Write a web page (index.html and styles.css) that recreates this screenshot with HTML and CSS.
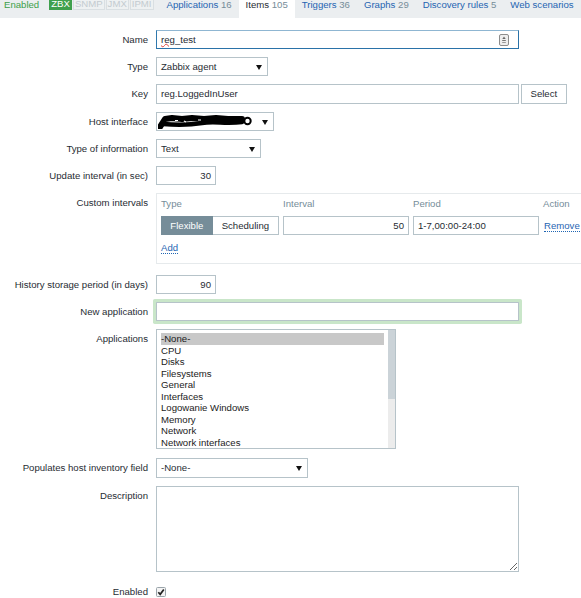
FILE: index.html
```html
<!DOCTYPE html>
<html>
<head>
<meta charset="utf-8">
<link rel="stylesheet" href="styles.css">
</head>
<body>
<div class="tabs">
  <span class="status">Enabled</span>
  <span class="badges"><span class="badge on">ZBX</span><span class="badge">SNMP</span><span class="badge">JMX</span><span class="badge">IPMI</span></span>
  <ul class="nav">
    <li><a>Applications</a> <span class="cnt">16</span></li>
    <li class="active">Items <span class="cnt">105</span></li>
    <li><a>Triggers</a> <span class="cnt">36</span></li>
    <li><a>Graphs</a> <span class="cnt">29</span></li>
    <li><a>Discovery rules</a> <span class="cnt">5</span></li>
    <li><a>Web scenarios</a></li>
  </ul>
</div>

<div class="form">
  <div class="row">
    <div class="lbl">Name</div>
    <div class="inp w-full focus"><span class="spell">reg</span>_test
      <svg class="autofill" width="10" height="12" viewBox="0 0 10 12"><rect x="0.5" y="0.5" width="9" height="11" rx="1.5" fill="#eeeeee" stroke="#8c8c8c"/><polygon points="3.3,5 6.7,5 5,2.6" fill="#666"/><rect x="3.2" y="6" width="3.6" height="1" fill="#777"/><rect x="3.2" y="8" width="3.6" height="1" fill="#999"/></svg>
    </div>
  </div>
  <div class="row">
    <div class="lbl">Type</div>
    <div class="inp sel w-type">Zabbix agent<svg class="arr" width="6" height="5" viewBox="0 0 6 5"><polygon points="0,0 6,0 3,5" fill="#111"/></svg></div>
  </div>
  <div class="row">
    <div class="lbl">Key</div>
    <div class="inp w-full">reg.LoggedInUser</div>
    <div class="btn">Select</div>
  </div>
  <div class="row">
    <div class="lbl">Host interface</div>
    <div class="inp sel w-host">
      <svg class="scribble" width="96" height="15" viewBox="0 0 96 15"><path d="M2,13 L7,5 L14,4 L24,5 L34,4 L46,5 L58,4 L70,5 L84,5" stroke="#000" stroke-width="6" fill="none" stroke-linecap="round" stroke-linejoin="round"/><path d="M5,10 C18,11 32,11 44,9 S68,10 84,8" stroke="#000" stroke-width="4.5" fill="none" stroke-linecap="round"/><path d="M17,6.5 L20,6.5 M26,7 L28,8 M40,6 L43,6" stroke="#fff" stroke-width="1.2"/><circle cx="89.5" cy="7" r="3.2" fill="#fff" stroke="#000" stroke-width="2"/></svg>
      <svg class="arr" width="6" height="5" viewBox="0 0 6 5"><polygon points="0,0 6,0 3,5" fill="#111"/></svg></div>
  </div>
  <div class="row">
    <div class="lbl">Type of information</div>
    <div class="inp sel w-info">Text<svg class="arr" width="6" height="5" viewBox="0 0 6 5"><polygon points="0,0 6,0 3,5" fill="#111"/></svg></div>
  </div>
  <div class="row">
    <div class="lbl">Update interval (in sec)</div>
    <div class="inp num">30</div>
  </div>
  <div class="row row-ci">
    <div class="lbl">Custom intervals</div>
    <div class="ci">
      <div class="ci-grid">
        <div class="th">Type</div>
        <div class="th">Interval</div>
        <div class="th">Period</div>
        <div class="th">Action</div>
        <div class="seg"><span class="seg-on">Flexible</span><span class="seg-off">Scheduling</span></div>
        <div class="inp num-wide">50</div>
        <div class="inp">1-7,00:00-24:00</div>
        <div class="act"><a class="link">Remove</a></div>
      </div>
      <div class="add"><a class="link">Add</a></div>
    </div>
  </div>
  <div class="row">
    <div class="lbl">History storage period (in days)</div>
    <div class="inp num">90</div>
  </div>
  <div class="row">
    <div class="lbl">New application</div>
    <div class="inp w-full glow"></div>
  </div>
  <div class="row row-lb">
    <div class="lbl">Applications</div>
    <div class="lb">
      <div class="lb-items">
        <div class="lb-item sel-item">-None-</div>
        <div class="lb-item">CPU</div>
        <div class="lb-item">Disks</div>
        <div class="lb-item">Filesystems</div>
        <div class="lb-item">General</div>
        <div class="lb-item">Interfaces</div>
        <div class="lb-item">Logowanie Windows</div>
        <div class="lb-item">Memory</div>
        <div class="lb-item">Network</div>
        <div class="lb-item">Network interfaces</div>
      </div>
      <div class="lb-sb"><div class="lb-thumb"></div></div>
    </div>
  </div>
  <div class="row">
    <div class="lbl">Populates host inventory field</div>
    <div class="inp sel w-pop">-None-<svg class="arr" width="6" height="5" viewBox="0 0 6 5"><polygon points="0,0 6,0 3,5" fill="#111"/></svg></div>
  </div>
  <div class="row">
    <div class="lbl">Description</div>
    <textarea class="ta"></textarea>
  </div>
  <div class="row row-en">
    <div class="lbl">Enabled</div>
    <svg class="chk" width="10" height="10" viewBox="0 0 10 10"><rect x="0.5" y="0.5" width="9" height="9" rx="1" fill="#f4f4f4" stroke="#9aa4aa"/><path d="M2.3,5.2 L4.2,7.3 L7.8,2.4" stroke="#222" stroke-width="1.7" fill="none"/></svg>
  </div>
</div>
</body>
</html>
```

FILE: styles.css
```css
html, body {
  margin: 0;
  padding: 0;
}
body {
  width: 581px;
  height: 598px;
  overflow: hidden;
  background: #ffffff;
  font-family: "Liberation Sans", Arial, sans-serif;
  font-size: 9.6px;
  color: #1f2c33;
}

/* top tab bar */
.tabs {
  height: 17.5px;
  background: #ebeef0;
  display: flex;
  align-items: flex-start;
  white-space: nowrap;
}
.status {
  margin-top: -1.5px;
  line-height: 11px;
  margin-left: 4px;
  margin-right: 10px;
  color: #3c9f4a;
}
.badges {
  display: flex;
  margin-top: -2px;
}
.badge {
  display: block;
  line-height: 9.5px;
  padding: 0 1px;
  border: 1px solid #d9dfe2;
  color: #c3cbd0;
  margin-right: 1px;
  background: #eef1f2;
}
.badge.on {
  background: #3fa04d;
  border-color: #3fa04d;
  color: #ffffff;
}
.nav {
  list-style: none;
  display: flex;
  margin: -1.5px 0 0 5px;
  padding: 0;
}
.nav li {
  height: 19px;
  line-height: 11px;
  padding: 0 7px;
}
.nav li a {
  color: #1f65b2;
}
.nav li.active {
  background: #ffffff;
  color: #1f2c33;
}
.cnt {
  color: #768d99;
}

/* form */
.form {
  padding-top: 12.5px;
}
.row {
  display: flex;
  align-items: flex-start;
  margin-bottom: 8px;
}
.lbl {
  flex: none;
  width: 148px;
  margin-right: 8px;
  text-align: right;
  padding-top: 4px;
  line-height: 11.2px;
  white-space: nowrap;
}
.inp {
  position: relative;
  box-sizing: border-box;
  height: 19.2px;
  border: 1px solid #b6c3c9;
  background: #ffffff;
  padding: 0 4px;
  line-height: 17.2px;
  white-space: nowrap;
  overflow: hidden;
}
.w-full { width: 363px; }
.w-type { width: 112px; }
.w-host { width: 118px; }
.w-info { width: 105px; }
.w-pop { width: 152px; }
.num {
  width: 60px;
  text-align: right;
}
.num-wide {
  text-align: right;
}
.focus {
  border-color: #8fb6d2 #2a72a8 #2a72a8 #2f78ad;
}
.spell {
  text-decoration: underline wavy #e0463c;
  text-decoration-thickness: 1px;
  text-underline-offset: 0px;
}
.autofill {
  position: absolute;
  right: 9px;
  top: 3.3px;
}
.sel .arr {
  position: absolute;
  right: 5px;
  top: 7px;
}
.scribble {
  position: absolute;
  left: 1px;
  top: 1.5px;
}
.btn {
  box-sizing: border-box;
  margin-left: 2px;
  width: 45.7px;
  height: 19.2px;
  border: 1px solid #b6c3c9;
  background: #ffffff;
  text-align: center;
  line-height: 17.2px;
}

/* custom intervals */
.row-ci {
  margin-bottom: 11.5px;
}
.ci {
  box-sizing: border-box;
  width: 440px;
  border: 1px solid #e6eaec;
  padding: 4px 4px 9px 4px;
  flex: none;
}
.ci-grid {
  display: grid;
  grid-template-columns: 118px 126px 126px auto;
  column-gap: 4px;
  row-gap: 6.2px;
}
.th {
  color: #768d99;
  line-height: 11.2px;
}
.seg {
  display: flex;
}
.seg span {
  box-sizing: border-box;
  height: 19.2px;
  line-height: 17.2px;
  text-align: center;
  border: 1px solid #b6c3c9;
}
.seg-on {
  width: 52px;
  background: #768d99;
  border-color: #768d99 !important;
  color: #ffffff;
}
.seg-off {
  width: 66.5px;
  background: #ffffff;
  border-left: none !important;
}
.act {
  line-height: 19.2px;
  padding-left: 1px;
}
.link {
  color: #1f65b2;
  border-bottom: 1px dotted #1f65b2;
}
.add {
  margin-top: 7.6px;
  line-height: 11.2px;
}

/* glow field */
.glow {
  box-shadow: 0 0 0 3px #c9e6c9;
  border-radius: 0.5px;
}

/* listbox */
.row-lb {
  margin-bottom: 9px;
}
.lb {
  box-sizing: border-box;
  width: 240px;
  height: 120px;
  border: 1px solid #b6c3c9;
  display: flex;
  overflow: hidden;
}
.lb-items {
  flex: 1;
  padding: 3px 4px 0 4px;
}
.lb-item {
  line-height: 11.5px;
  height: 11.5px;
  white-space: nowrap;
  color: #1b1b1b;
}
.sel-item {
  background: #c8c8c8;
}
.lb-sb {
  width: 7px;
  flex: none;
  background: #ececec;
}
.lb-thumb {
  height: 69px;
  background: #cbd3d8;
}

/* textarea */
.ta {
  box-sizing: border-box;
  width: 363px;
  height: 86.4px;
  margin: 0;
  padding: 3px 4px;
  border: 1px solid #b6c3c9;
  font-family: "Liberation Sans", Arial, sans-serif;
  font-size: 9.6px;
  resize: both;
  outline: none;
}
.row-en {
  margin-top: 10px;
}
.chk {
  margin-top: 5.5px;
}
```
